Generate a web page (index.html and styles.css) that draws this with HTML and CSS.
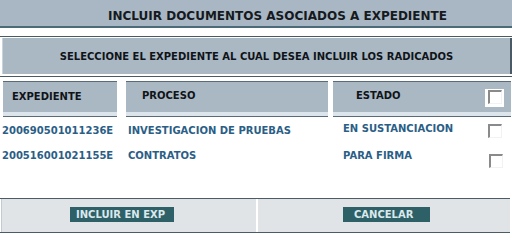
FILE: index.html
```html
<!DOCTYPE html>
<html lang="es">
<head>
<meta charset="utf-8">
<title>Incluir documentos</title>
<link rel="stylesheet" href="styles.css">
</head>
<body>
<div class="page">
  <div class="title">INCLUIR DOCUMENTOS ASOCIADOS A EXPEDIENTE</div>

  <div class="instr-wrap">
    <div class="instr">SELECCIONE EL EXPEDIENTE AL CUAL DESEA INCLUIR LOS RADICADOS</div>
  </div>

  <div class="thead">
    <div class="th th-exp">EXPEDIENTE</div>
    <div class="th th-proc">PROCESO</div>
    <div class="th th-est"><span class="th-label">ESTADO</span><span class="chk-wrap"><span class="chk"></span></span></div>
  </div>

  <div class="row row-1">
    <div class="td td-exp">200690501011236E</div>
    <div class="td td-proc">INVESTIGACION DE PRUEBAS</div>
    <div class="td td-est">EN SUSTANCIACION</div>
    <div class="td td-chk"><span class="chk"></span></div>
  </div>
  <div class="row row-2">
    <div class="td td-exp">200516001021155E</div>
    <div class="td td-proc">CONTRATOS</div>
    <div class="td td-est">PARA FIRMA</div>
    <div class="td td-chk"><span class="chk"></span></div>
  </div>

  <div class="actions">
    <div class="act act-left"><span class="btn btn-incluir">INCLUIR EN EXP</span></div>
    <div class="act act-right"><span class="btn btn-cancelar">CANCELAR</span></div>
  </div>
</div>
</body>
</html>
```

FILE: styles.css
```css
html, body {
  margin: 0;
  padding: 0;
  background: #ffffff;
}

.page {
  width: 512px;
  height: 239px;
  font-family: "DejaVu Sans", Verdana, sans-serif;
  font-weight: bold;
  font-size: 10px;
  line-height: 12px;
  color: #141a20;
  overflow: hidden;
}

.title {
  height: 17px;
  padding: 9px 0 0 43px;
  background: #a8b7c3;
  border-bottom: 2px solid #4b6b78;
  font-size: 12px;
  line-height: 14px;
  text-align: center;
  color: #16191d;
}

.instr-wrap {
  margin-top: 8px;
  border-top: 1px solid #4a5964;
  border-bottom: 1px solid #4a5964;
  padding: 1px 0 2px 2px;
}

.instr {
  height: 36px;
  background: #aab8c4;
  border-right: 2px solid #4a5964;
  border-left: 1px solid #c9d3db;
  display: flex;
  align-items: center;
  justify-content: center;
  padding-top: 1px;
  box-sizing: border-box;
  color: #101418;
}

.thead {
  display: flex;
  margin-top: 4px;
  padding-left: 3px;
}

.th {
  height: 34px;
  border-top: 1px solid #5a6a76;
  border-bottom: 1px solid #5a6a76;
  background: linear-gradient(#aab8c4 0, #aab8c4 30px, #dde5ec 30px);
  box-sizing: content-box;
  color: #101418;
}

.th-exp {
  width: 105px;
  padding: 9px 0 0 9px;
  height: 25px;
}

.th-proc {
  width: 186px;
  margin-left: 9px;
  padding: 8px 0 0 16px;
  height: 26px;
}

.th-est {
  width: 155px;
  margin-left: 5px;
  padding: 8px 0 0 23px;
  height: 26px;
  display: flex;
  justify-content: space-between;
  align-items: flex-start;
}

.chk-wrap {
  display: block;
  width: 13px;
  height: 13px;
  padding: 1px 3px 4px 3px;
  margin: -1px 7px 0 0;
  background: #ffffff;
}

.chk {
  display: block;
  width: 11px;
  height: 11px;
  border-top: 2px solid #8a8a8a;
  border-left: 2px solid #8a8a8a;
  border-right: 1px solid #f2f2f2;
  border-bottom: 1px solid #f2f2f2;
  background: #ffffff;
}

.row {
  display: flex;
  height: 25px;
  padding-left: 2px;
  color: #2b5e86;
}

.td {
  padding-top: 7px;
  white-space: nowrap;
}

.td-exp { width: 126px; }
.td-proc { width: 215px; }
.td-est { width: 145px; }
.td-chk { width: 22px; }

.row-1 { margin-top: 1px; }
.row-1 .td-est { padding-top: 5px; }
.row-1 .td-chk { padding-top: 6px; }
.row-2 .td-chk { padding-top: 11px; }
.row-2 .td-chk .chk { margin-left: 1px; }

.actions {
  display: flex;
  width: 510px;
  margin-top: 30px;
  border-top: 1px solid #4d5b64;
  border-bottom: 1px solid #4d5b64;
  padding-left: 1px;
  box-sizing: border-box;
  height: 35px;
}

.act {
  background: #e0e4e7;
  height: 33px;
  box-sizing: border-box;
  padding-top: 8px;
}

.act-left {
  width: 255px;
  border-left: 1px solid #c4cacf;
  padding-left: 68px;
}

.act-right {
  width: 252px;
  margin-left: 2px;
  padding-left: 85px;
}

.btn {
  display: inline-block;
  height: 15px;
  line-height: 15px;
  background: #2e6068;
  color: #dbe9ec;
}

.btn-incluir {
  padding: 0 9px 0 6px;
}

.btn-cancelar {
  padding: 0 17px 0 11px;
}
```
